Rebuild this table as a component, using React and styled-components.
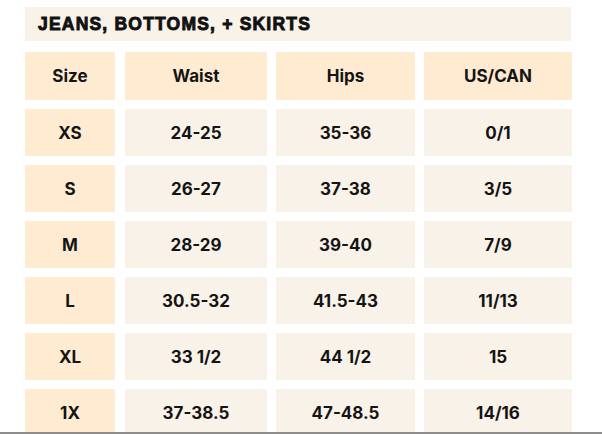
import React from "react";
import styled, { createGlobalStyle } from "styled-components";

const Global = createGlobalStyle`
  html, body { margin: 0; padding: 0; background: #ffffff; }
  * { box-sizing: border-box; }
`;

const Frame = styled.div`
  width: 602px;
  height: 434px;
  overflow: hidden;
  border-bottom: 2px solid #8d8d8d;
  background: #ffffff;
  padding: 7px 0 0 25px;
`;

const Title = styled.div`
  width: 546px;
  height: 34px;
  background: #f9f2e9;
  display: flex;
  align-items: center;
  padding-left: 13px;
  font-family: "Liberation Sans", Arial, sans-serif;
  font-weight: 700;
  font-size: 17.5px;
  letter-spacing: 1.2px;
  -webkit-text-stroke: 0.9px #111111;
  color: #111111;
`;

const Table = styled.div`
  margin-top: 11px;
  display: grid;
  grid-template-columns: 90px 143px 139px 148px;
  grid-auto-rows: 47px;
  grid-template-rows: 48px;
  column-gap: 9px;
  row-gap: 9px;
  & > :nth-child(4n + 2) { margin-left: 1px; }
`;

const Cell = styled.div`
  background: ${(p) => (p.$accent ? "#feebd2" : "#f9f2e9")};
  display: flex;
  align-items: center;
  justify-content: center;
  font-family: Inter, "Open Sans", sans-serif;
  font-weight: 700;
  font-size: 17px;
  color: #141414;
`;

const header = ["Size", "Waist", "Hips", "US/CAN"];
const rows = [
  ["XS", "24-25", "35-36", "0/1"],
  ["S", "26-27", "37-38", "3/5"],
  ["M", "28-29", "39-40", "7/9"],
  ["L", "30.5-32", "41.5-43", "11/13"],
  ["XL", "33 1/2", "44 1/2", "15"],
  ["1X", "37-38.5", "47-48.5", "14/16"],
];

export default function App() {
  return (
    <>
      <Global />
      <Frame>
        <Title>JEANS, BOTTOMS, + SKIRTS</Title>
        <Table>
          {header.map((h) => (
            <Cell key={h} $accent>
              {h}
            </Cell>
          ))}
          {rows.map((r) =>
            r.map((v, i) => (
              <Cell key={r[0] + i} $accent={i === 0}>
                {v}
              </Cell>
            ))
          )}
        </Table>
      </Frame>
    </>
  );
}
